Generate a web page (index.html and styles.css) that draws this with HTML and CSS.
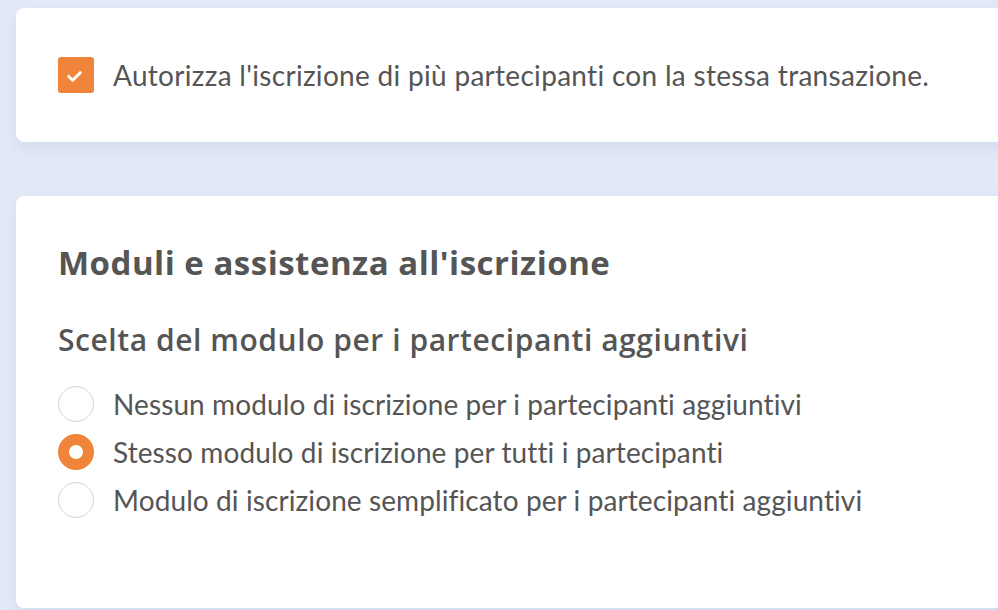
FILE: index.html
```html
<!DOCTYPE html>
<html lang="it">
<head>
    <meta charset="UTF-8">
    <title>Impostazioni iscrizione</title>
    <link rel="stylesheet" href="styles.css">
</head>
<body>
    <div class="page">
        <section class="card card-top">
            <label class="check-row">
                <span class="checkbox">
                    <svg viewBox="0 0 512 512" width="15" height="15"><path fill="#fff" d="M173.9 439.4l-166.4-166.4c-10-10-10-26.2 0-36.2l36.2-36.2c10-10 26.2-10 36.2 0L192 312.7 432.1 72.6c10-10 26.2-10 36.2 0l36.2 36.2c10 10 10 26.2 0 36.2l-294.4 294.4c-10 10-26.2 10-36.2 0z"/></svg>
                </span>
                <span class="check-label">Autorizza l'iscrizione di più partecipanti con la stessa transazione.</span>
            </label>
        </section>

        <section class="card card-forms">
            <h2 class="card-title">Moduli e assistenza all'iscrizione</h2>
            <h3 class="group-title">Scelta del modulo per i partecipanti aggiuntivi</h3>
            <div class="radio-list">
                <label class="radio-row">
                    <span class="radio"></span>
                    <span>Nessun modulo di iscrizione per i partecipanti aggiuntivi</span>
                </label>
                <label class="radio-row">
                    <span class="radio checked"></span>
                    <span>Stesso modulo di iscrizione per tutti i partecipanti</span>
                </label>
                <label class="radio-row">
                    <span class="radio"></span>
                    <span>Modulo di iscrizione semplificato per i partecipanti aggiuntivi</span>
                </label>
            </div>
        </section>
    </div>
</body>
</html>
```

FILE: styles.css
```css
/* Reset */
* {
    margin: 0;
    padding: 0;
    box-sizing: border-box;
}

body {
    font-family: Lato, "Open Sans", sans-serif;
    background-color: #e3e9f6;
    color: #555;
    overflow: hidden;
    height: 610px;
}

.page {
    padding: 8px 0 0 16px;
    width: 1040px;
}

/* Cards */
.card {
    background: #fff;
    border-radius: 8px;
    box-shadow: 0 6px 14px rgba(110, 135, 200, 0.14);
}

.card-top {
    height: 134px;
    padding: 0 42px;
    display: flex;
    align-items: center;
}

.card-forms {
    margin-top: 54px;
    height: 412px;
    padding: 40px 42px;
}

/* Checkbox */
.check-row {
    display: flex;
    align-items: center;
    gap: 19px;
}

.checkbox {
    width: 36px;
    height: 36px;
    border-radius: 3px;
    background-color: #f0843a;
    display: flex;
    align-items: center;
    justify-content: center;
    padding: 3px 3px 0 0;
}

.check-label {
    font-size: 28px;
    letter-spacing: 0.3px;
}

/* Titles */
.card-title {
    font-family: "Open Sans", Lato, sans-serif;
    font-size: 33px;
    font-weight: 700;
    letter-spacing: 0.5px;
    line-height: 54px;
    color: #555;
}

.group-title {
    font-family: "Open Sans", Lato, sans-serif;
    font-size: 30px;
    font-weight: 600;
    letter-spacing: 0.55px;
    line-height: 40px;
    margin-top: 30px;
    color: #555;
}

/* Radios */
.radio-list {
    margin-top: 20px;
}

.radio-row {
    display: flex;
    align-items: center;
    gap: 19px;
    height: 48px;
    font-size: 28px;
    letter-spacing: 0.1px;
}

.radio {
    width: 36px;
    height: 36px;
    border-radius: 50%;
    border: 1.5px solid #cdd3df;
    background: #fff;
    flex-shrink: 0;
}

.radio.checked {
    border: 11.5px solid #f0843a;
}
```
